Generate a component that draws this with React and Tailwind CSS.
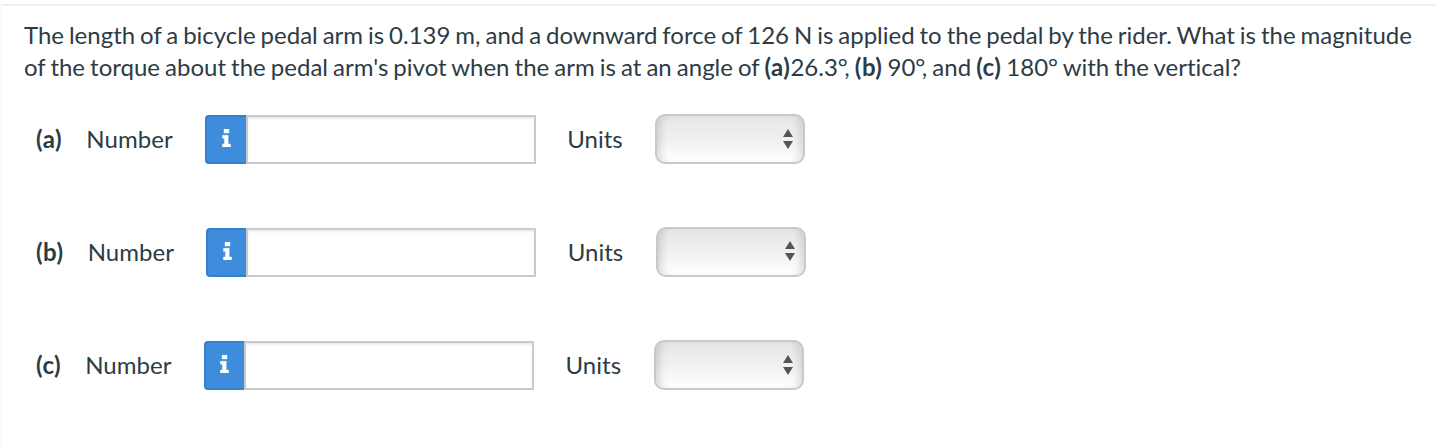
const rows = [
  { label: '(a)', number: 'ml-[24.3px]', addon: 'w-[41px]', box: 'ml-[32.3px] w-[331px]', units: 'ml-[31.2px]', select: 'ml-[32.2px]', arrow: 'pr-[10px]' },
  { label: '(b)', number: 'ml-[24px]', addon: 'w-[40px]', box: 'ml-[32px] w-[330px]', units: 'ml-[31.7px]', select: 'ml-[32.3px]', arrow: 'pr-[9px] pb-[2px]' },
  { label: '(c)', number: 'ml-[24px]', addon: 'w-[40px]', box: 'ml-[32px] w-[330px]', units: 'ml-[32px]', select: 'ml-[32.8px]', arrow: 'pr-[9px]' },
];

function Row({ r }) {
  return (
    <div className="flex h-[50px] items-center text-[24px] leading-[32px]">
      <span className="font-bold tracking-[0.5px]">{r.label}</span>
      <span className={`tracking-[0.06px] ${r.number}`}>Number</span>
      <div className={`flex h-[49px] ${r.box}`}>
        <div className={`flex items-start justify-center rounded-l-[4px] border-2 border-r-0 border-[#357fcb] bg-[#3e8cdc] pt-[12px] ${r.addon}`}>
          <svg width="9" height="18" viewBox="0 0 9 18" fill="white">
            <path d="M2 0h5v4h-5zM0.4 6.3h5.8v8.7h2.4v3h-8.2v-3h2v-5.7h-2z" stroke="white" strokeWidth="0.4" strokeLinejoin="round" />
          </svg>
        </div>
        <input className="min-w-0 flex-1 border-2 border-[#cacaca] bg-white shadow-[inset_0_2px_2px_rgba(0,0,0,0.075)] outline-none" />
      </div>
      <span className={r.units}>Units</span>
      <div className={`flex h-[50px] w-[150px] items-center justify-end rounded-[10px] border-2 border-[#c9c9c9] bg-linear-to-b from-[#e6e6e6] via-[#f0f0f0] to-white shadow-[inset_9px_0_8px_-6px_rgba(0,0,0,0.15),inset_-9px_0_8px_-6px_rgba(0,0,0,0.13)] ${r.select} ${r.arrow}`}>
        <svg width="10" height="20" viewBox="0 0 10 20" fill="#555555"><path d="M5 0l5 8H0zM5 20l5-8H0z" /></svg>
      </div>
    </div>
  );
}

export default function App() {
  return (
    <main className="h-[448px] overflow-hidden border-l-2 border-[#fafafa] bg-white pt-[4px] font-['Lato',sans-serif] text-[#2d3b45] [font-variant-ligatures:none]">
      <div className="border-t-2 border-[#eeeeee] pt-[13px]">
        <div className="ml-[22px] text-[24px] leading-[32px] whitespace-nowrap">
          <p className="[word-spacing:-1.22px]">
            The length of a bicycle pedal arm is 0.139 m, and a downward force of 126 N is applied to the pedal by the rider. What is the magnitude
          </p>
          <p className="[word-spacing:-1.08px]">
            of the torque about the pedal arm's pivot when the arm is at an angle of <b className="tracking-[0.5px]">(a)</b>26.3<span className="tracking-[-3.5px]">°</span>, <b className="tracking-[0.5px]">(b)</b> 90<span className="tracking-[-3.5px]">°</span>, and <b className="tracking-[0.5px]">(c)</b> 180° with the vertical?
          </p>
        </div>
        <div className="mt-[31px] ml-[34px] flex flex-col gap-[63px]">
          {rows.map((r) => <Row key={r.label} r={r} />)}
        </div>
      </div>
    </main>
  );
}
